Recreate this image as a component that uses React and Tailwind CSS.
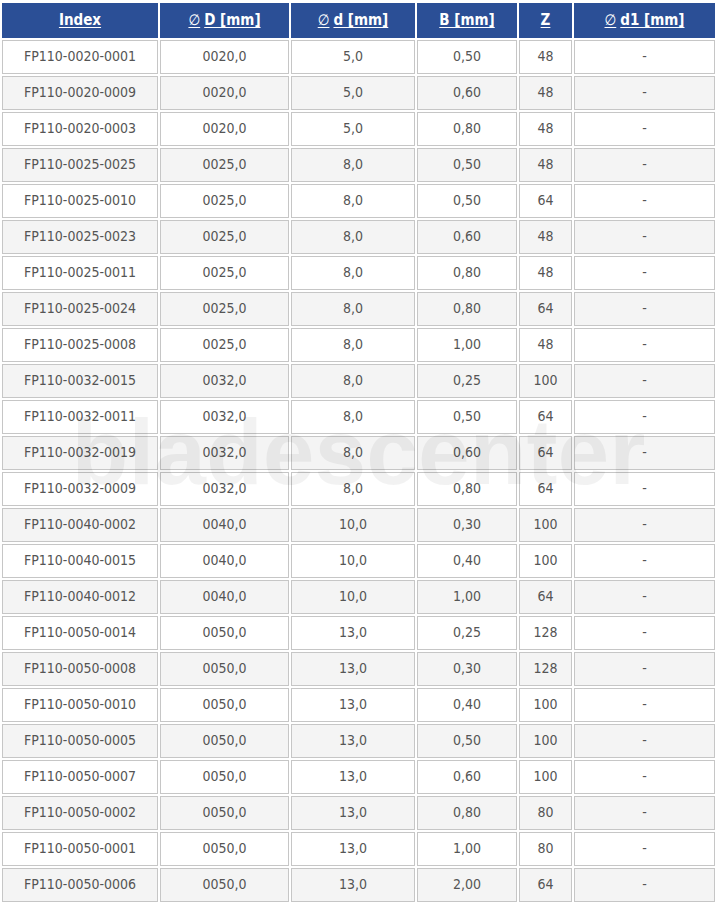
const COLS = [
  { label: "Index", w: "w-[156px]" },
  { label: "D [mm]", dia: true, w: "w-[129px]" },
  { label: "d [mm]", dia: true, w: "w-[124px]" },
  { label: "B [mm]", w: "w-[100px]" },
  { label: "Z", w: "w-[53px]" },
  { label: "d1 [mm]", dia: true, w: "w-[141px]" },
];

const ROWS = [
  ["FP110-0020-0001", "0020,0", "5,0", "0,50", "48"],
  ["FP110-0020-0009", "0020,0", "5,0", "0,60", "48"],
  ["FP110-0020-0003", "0020,0", "5,0", "0,80", "48"],
  ["FP110-0025-0025", "0025,0", "8,0", "0,50", "48"],
  ["FP110-0025-0010", "0025,0", "8,0", "0,50", "64"],
  ["FP110-0025-0023", "0025,0", "8,0", "0,60", "48"],
  ["FP110-0025-0011", "0025,0", "8,0", "0,80", "48"],
  ["FP110-0025-0024", "0025,0", "8,0", "0,80", "64"],
  ["FP110-0025-0008", "0025,0", "8,0", "1,00", "48"],
  ["FP110-0032-0015", "0032,0", "8,0", "0,25", "100"],
  ["FP110-0032-0011", "0032,0", "8,0", "0,50", "64"],
  ["FP110-0032-0019", "0032,0", "8,0", "0,60", "64"],
  ["FP110-0032-0009", "0032,0", "8,0", "0,80", "64"],
  ["FP110-0040-0002", "0040,0", "10,0", "0,30", "100"],
  ["FP110-0040-0015", "0040,0", "10,0", "0,40", "100"],
  ["FP110-0040-0012", "0040,0", "10,0", "1,00", "64"],
  ["FP110-0050-0014", "0050,0", "13,0", "0,25", "128"],
  ["FP110-0050-0008", "0050,0", "13,0", "0,30", "128"],
  ["FP110-0050-0010", "0050,0", "13,0", "0,40", "100"],
  ["FP110-0050-0005", "0050,0", "13,0", "0,50", "100"],
  ["FP110-0050-0007", "0050,0", "13,0", "0,60", "100"],
  ["FP110-0050-0002", "0050,0", "13,0", "0,80", "80"],
  ["FP110-0050-0001", "0050,0", "13,0", "1,00", "80"],
  ["FP110-0050-0006", "0050,0", "13,0", "2,00", "64"],
];

export default function App() {
  return (
    <div className="relative w-[717px] h-[905px] bg-white overflow-hidden" style={{ fontFamily: '"DejaVu Sans Condensed", "DejaVu Sans", sans-serif' }}>
      <table className="mt-px border-separate border-spacing-[2px] table-fixed w-[717px]">
        <thead>
          <tr>
            {COLS.map((c) => (
              <th key={c.label} className={`${c.w} h-[35px] p-0 pb-px bg-[#2b4f96] text-white text-[15px] font-bold text-center align-middle`}>
                <span className="underline underline-offset-2">
                  {c.dia && <span className="font-normal mr-1">∅</span>}
                  {c.label}
                </span>
              </th>
            ))}
          </tr>
        </thead>
        <tbody>
          {ROWS.map((r, i) => (
            <tr key={r[0]} className={i % 2 ? "bg-[#f4f4f4]" : "bg-white"}>
              {[...r, "-"].map((v, j) => (
                <td key={j} className="h-[34px] p-0 pb-px border border-[#c6c6c6] text-center align-middle text-[14px] text-[#555]">
                  {v}
                </td>
              ))}
            </tr>
          ))}
        </tbody>
      </table>

      {/* watermark */}
      <div className="absolute left-0 right-0 top-[406px] text-center pointer-events-none select-none text-[93px] font-bold leading-none text-black/[0.05]" style={{ fontFamily: '"Liberation Sans", Arial, sans-serif' }}>
        bladescenter
      </div>
    </div>
  );
}
